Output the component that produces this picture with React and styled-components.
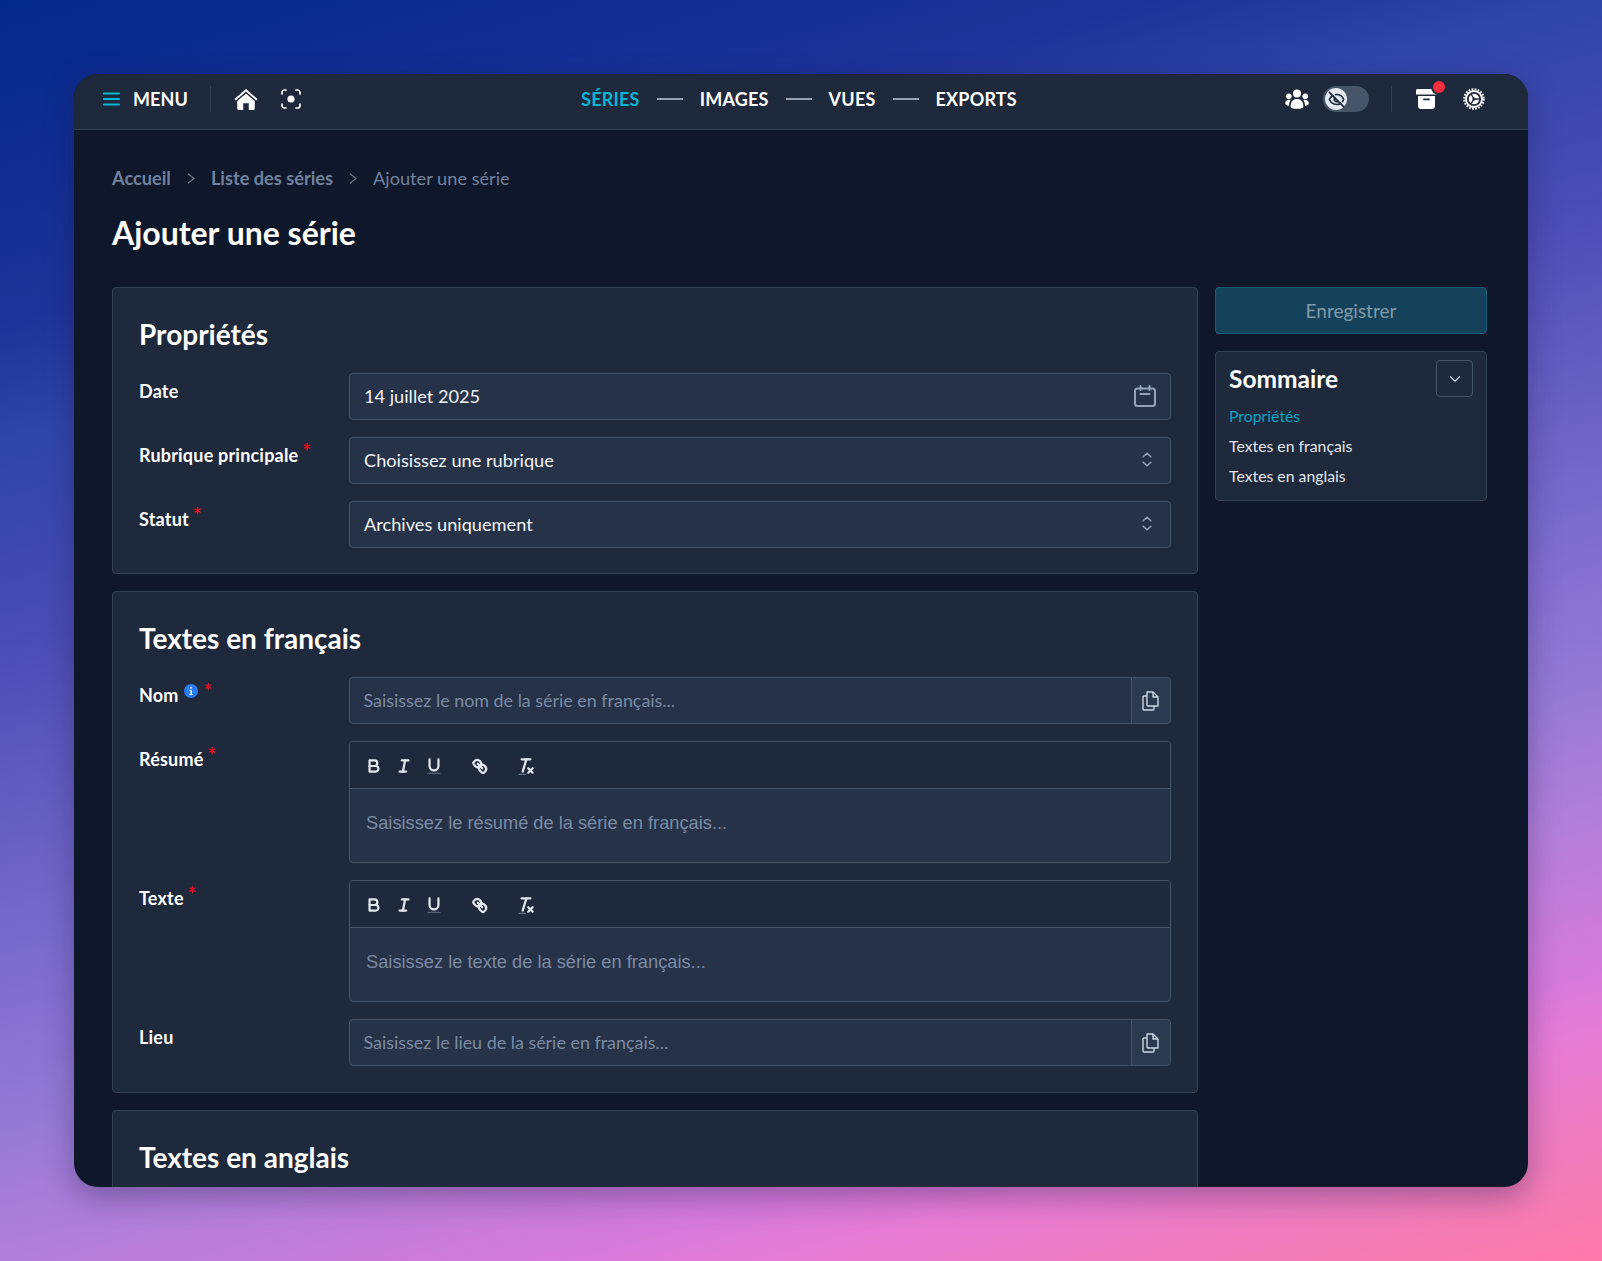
import React from 'react';
import styled, { createGlobalStyle } from 'styled-components';
import { ChevronDown, EyeOff } from 'lucide-react';

const GlobalStyle = createGlobalStyle`
  html, body {
    margin: 0;
    padding: 0;
  }
  body {
    font-family: Lato, "Liberation Sans", sans-serif;
    color: #fff;
  }
  * {
    box-sizing: border-box;
  }
`;

const MenuIcon = () => (
  <svg width="17" height="14" viewBox="0 0 17 14" fill="#06b6d4">
    <rect x="0" y="0.5" width="17" height="2" rx="0.8" />
    <rect x="0" y="6" width="17" height="2" rx="0.8" />
    <rect x="0" y="11.5" width="17" height="2" rx="0.8" />
  </svg>
);

const HomeIcon = () => (
  <svg width="24" height="23" viewBox="0 0 26 24" fill="#fff">
    <path d="M13 0.5 L25.5 11.5 L24 13 L13 3.4 L2 13 L0.5 11.5 Z" />
    <path d="M13 5.4 L22.5 13.6 V21.5 a2 2 0 0 1 -2 2 H16 V16 H10 V23.5 H5.5 a2 2 0 0 1 -2 -2 V13.6 Z" />
  </svg>
);

const FocusIcon = () => (
  <svg width="20" height="20" viewBox="0 0 20 20" fill="none" stroke="#fff" strokeWidth="1.7" strokeLinecap="round">
    <path d="M1 5 V3.5 A2.5 2.5 0 0 1 3.5 1 H5" />
    <path d="M15 1 H16.5 A2.5 2.5 0 0 1 19 3.5 V5" />
    <path d="M19 15 V16.5 A2.5 2.5 0 0 1 16.5 19 H15" />
    <path d="M5 19 H3.5 A2.5 2.5 0 0 1 1 16.5 V15" />
    <circle cx="10" cy="10" r="3.6" fill="#fff" stroke="none" />
  </svg>
);

const UsersIcon = () => (
  <svg width="24" height="20" viewBox="0 0 24 20" fill="#fff">
    <circle cx="12" cy="4.4" r="4" />
    <circle cx="3.8" cy="7.2" r="2.8" />
    <circle cx="20.2" cy="7.2" r="2.8" />
    <path d="M5.6 18 C5.6 12.6 8 10 12 10 C16 10 18.4 12.6 18.4 18 C18.4 19.2 16 19.8 12 19.8 C8 19.8 5.6 19.2 5.6 18 Z" />
    <path d="M0.2 14.6 C0.2 12 1.6 10.8 4.2 10.8 C4.8 10.8 5.2 10.9 5.6 11 C4.6 12.4 4.1 14.2 4 16.8 C1.6 16.6 0.2 15.9 0.2 14.6 Z" />
    <path d="M23.8 14.6 C23.8 12 22.4 10.8 19.8 10.8 C19.2 10.8 18.8 10.9 18.4 11 C19.4 12.4 19.9 14.2 20 16.8 C22.4 16.6 23.8 15.9 23.8 14.6 Z" />
  </svg>
);

const ArchiveIcon = () => (
  <svg width="21" height="20" viewBox="0 0 21 20" fill="#fff">
    <path d="M1.5 0 H19.5 a1.5 1.5 0 0 1 1.5 1.5 V5.5 H0 V1.5 A1.5 1.5 0 0 1 1.5 0 Z" />
    <path fillRule="evenodd" d="M2 7 H19 V17 a3 3 0 0 1 -3 3 H5 a3 3 0 0 1 -3 -3 Z M8 9.5 a0.9 0.9 0 0 0 0 1.8 H13 a0.9 0.9 0 0 0 0 -1.8 Z" />
  </svg>
);

const GearIcon = () => (
  <svg width="22" height="22" viewBox="0 0 22 22" fill="none" stroke="#fff">
    <circle cx="11" cy="11" r="8" strokeWidth="1.8" />
    <circle cx="11" cy="11" r="9.8" strokeWidth="2" strokeDasharray="1.7 1.4" />
    <circle cx="11" cy="11" r="5.2" fill="#fff" stroke="none" />
    <path d="M11 11 L16.4 11 M11 11 L8.2 6.4 M11 11 L8.2 15.6" stroke="#1e293b" strokeWidth="1.4" />
    <circle cx="11" cy="11" r="1.6" fill="#1e293b" stroke="none" />
  </svg>
);

const CrumbChevron = () => (
  <svg width="8" height="11" viewBox="0 0 8 11" fill="none" stroke="#64748b" strokeWidth="1.2">
    <path d="M1 0.7 L7 5.5 L1 10.3" />
  </svg>
);

const CalendarIcon = () => (
  <svg width="22" height="22" viewBox="0 0 22 22" fill="none" stroke="#94a3b8" strokeWidth="2" strokeLinecap="round">
    <rect x="1" y="3.5" width="20" height="17.5" rx="2.5" />
    <path d="M6.5 1 V5 M15.5 1 V5 M6.5 9 H15.5" />
  </svg>
);

const UpDownIcon = () => (
  <svg width="10" height="15" viewBox="0 0 10 15" fill="none" stroke="#94a3b8" strokeWidth="1.5" strokeLinecap="round" strokeLinejoin="round">
    <path d="M1.2 4.8 L5 1.2 L8.8 4.8" />
    <path d="M1.2 10.2 L5 13.8 L8.8 10.2" />
  </svg>
);

const CopyIcon = () => (
  <svg width="17" height="20" viewBox="0 0 17 20" fill="none" stroke="#cbd5e1" strokeWidth="1.4" strokeLinejoin="round">
    <path d="M5 1 H11 L16 6 V15 H6 a1 1 0 0 1 -1 -1 Z" />
    <path d="M11 1 V6 H16" />
    <path d="M5 5 H2 a1 1 0 0 0 -1 1 V18 a1 1 0 0 0 1 1 H11 a1 1 0 0 0 1 -1 V15" />
  </svg>
);

const BoldIcon = () => (
  <svg viewBox="0 0 18 18">
    <path d="M5,4H9.5A2.5,2.5,0,0,1,12,6.5v0A2.5,2.5,0,0,1,9.5,9H5A0,0,0,0,1,5,9V4A0,0,0,0,1,5,4Z" />
    <path d="M5,9h5.5A2.5,2.5,0,0,1,13,11.5v0A2.5,2.5,0,0,1,10.5,14H5a0,0,0,0,1,0,0V9A0,0,0,0,1,5,9Z" />
  </svg>
);

const ItalicIcon = () => (
  <svg viewBox="0 0 18 18">
    <line x1="7" x2="13" y1="4" y2="4" />
    <line x1="5" x2="11" y1="14" y2="14" />
    <line x1="8" x2="10" y1="14" y2="4" />
  </svg>
);

const UnderlineIcon = () => (
  <svg viewBox="0 0 18 18">
    <path d="M5,3V9a4.012,4.012,0,0,0,4,4H9a4.012,4.012,0,0,0,4-4V3" />
    <rect x="3" y="15" width="12" height="1" rx="0.5" fill="#64748b" stroke="none" />
  </svg>
);

const LinkIcon = () => (
  <svg viewBox="0 0 18 18">
    <line x1="7" x2="11" y1="7" y2="11" />
    <path d="M8.9,4.577a3.476,3.476,0,0,1,.36,4.679A3.476,3.476,0,0,1,4.577,8.9C3.185,7.5,2.331,6.458,3.21,5.577l1.367-1.367A3.476,3.476,0,0,1,8.9,4.577Z" />
    <path d="M13.423,9.1a3.476,3.476,0,0,0-4.679-.36,3.476,3.476,0,0,0,.36,4.679c1.392,1.392,2.5,2.562,3.319,1.7l1.367-1.367A3.476,3.476,0,0,0,13.423,9.1Z" />
  </svg>
);

const CleanIcon = () => (
  <svg viewBox="0 0 18 18">
    <line x1="5" x2="13" y1="3" y2="3" />
    <line x1="6" x2="9.35" y1="14" y2="3" />
    <line x1="11" x2="15" y1="11" y2="15" />
    <line x1="15" x2="11" y1="11" y2="15" />
    <rect x="2" y="16" width="7" height="1" rx="0.5" fill="#64748b" stroke="none" />
  </svg>
);

const InfoIcon = () => (
  <svg width="14" height="14" viewBox="0 0 14 14">
    <circle cx="7" cy="7" r="7" fill="#2b7bf3" />
    <circle cx="7" cy="3.8" r="1" fill="#fff" />
    <path d="M5.6 6 H7.8 V10 H8.8 V11 H5.4 V10 H6.5 V7 H5.6 Z" fill="#fff" />
  </svg>
);

const Toolbar = () => (
  <EditorBar>
    <ToolButton><BoldIcon /></ToolButton>
    <ToolButton><ItalicIcon /></ToolButton>
    <ToolButton><UnderlineIcon /></ToolButton>
    <ToolButton $spaced><LinkIcon /></ToolButton>
    <ToolButton $spaced><CleanIcon /></ToolButton>
  </EditorBar>
);

const Field = ({ label, info, required, children }) => (
  <Row>
    <Label>
      {label}
      {info && <InfoWrap><InfoIcon /></InfoWrap>}
      {required && <Star $afterInfo={info}>*</Star>}
    </Label>
    {children}
  </Row>
);

const App = () => (
  <>
    <GlobalStyle />
    <Page>
      <Window>
        <TopBar>
          <BarLeft>
            <MenuButton>
              <MenuIcon />
              MENU
            </MenuButton>
            <Divider />
            <HomeIcon />
            <FocusIcon />
          </BarLeft>
          <Steps>
            <Step $active>SÉRIES</Step>
            <Dash />
            <Step>IMAGES</Step>
            <Dash />
            <Step>VUES</Step>
            <Dash />
            <Step>EXPORTS</Step>
          </Steps>
          <BarRight>
            <UsersIcon />
            <Toggle>
              <Knob><EyeOff size={17} color="#1e293b" strokeWidth={2.4} /></Knob>
            </Toggle>
            <Divider $wide />
            <ArchiveWrap>
              <ArchiveIcon />
              <Badge />
            </ArchiveWrap>
            <GearIcon />
          </BarRight>
        </TopBar>

        <Content>
          <Crumbs>
            <CrumbLink>Accueil</CrumbLink>
            <CrumbChevron />
            <CrumbLink>Liste des séries</CrumbLink>
            <CrumbChevron />
            <CrumbCurrent>Ajouter une série</CrumbCurrent>
          </Crumbs>
          <PageTitle>Ajouter une série</PageTitle>

          <Columns>
            <MainColumn>
              <Card>
                <CardTitle>Propriétés</CardTitle>
                <Rows>
                  <Field label="Date">
                    <Input>
                      <Value>14 juillet 2025</Value>
                      <CalendarIcon />
                    </Input>
                  </Field>
                  <Field label="Rubrique principale" required>
                    <Input>
                      <Value>Choisissez une rubrique</Value>
                      <SelectIcon><UpDownIcon /></SelectIcon>
                    </Input>
                  </Field>
                  <Field label="Statut" required>
                    <Input>
                      <Value>Archives uniquement</Value>
                      <SelectIcon><UpDownIcon /></SelectIcon>
                    </Input>
                  </Field>
                </Rows>
              </Card>

              <Card>
                <CardTitle>Textes en français</CardTitle>
                <Rows>
                  <Field label="Nom" info required>
                    <InputGroup>
                      <GroupInput><Placeholder>Saisissez le nom de la série en français...</Placeholder></GroupInput>
                      <CopyButton><CopyIcon /></CopyButton>
                    </InputGroup>
                  </Field>
                  <Field label="Résumé" required>
                    <Editor>
                      <Toolbar />
                      <EditorBody>Saisissez le résumé de la série en français...</EditorBody>
                    </Editor>
                  </Field>
                  <Field label="Texte" required>
                    <Editor>
                      <Toolbar />
                      <EditorBody>Saisissez le texte de la série en français...</EditorBody>
                    </Editor>
                  </Field>
                  <Field label="Lieu">
                    <InputGroup>
                      <GroupInput><Placeholder>Saisissez le lieu de la série en français...</Placeholder></GroupInput>
                      <CopyButton><CopyIcon /></CopyButton>
                    </InputGroup>
                  </Field>
                </Rows>
              </Card>

              <Card>
                <CardTitle>Textes en anglais</CardTitle>
              </Card>
            </MainColumn>

            <SideColumn>
              <SaveButton>Enregistrer</SaveButton>
              <Summary>
                <SummaryHead>
                  <SummaryTitle>Sommaire</SummaryTitle>
                  <Collapse><ChevronDown size={18} color="#cbd5e1" strokeWidth={1.5} /></Collapse>
                </SummaryHead>
                <SummaryLink $active>Propriétés</SummaryLink>
                <SummaryLink>Textes en français</SummaryLink>
                <SummaryLink>Textes en anglais</SummaryLink>
              </Summary>
            </SideColumn>
          </Columns>
        </Content>
      </Window>
    </Page>
  </>
);

export default App;

const Page = styled.div`
  height: 1261px;
  padding: 74px 74px 0;
  overflow: hidden;
  background: linear-gradient(
    164.4deg,
    #02288a 0%,
    #1e3399 19%,
    #2f45a8 26%,
    #4b4cb5 38%,
    #6a62c4 50%,
    #7f6ed0 58%,
    #947ad4 66%,
    #b27fda 74%,
    #d67ada 83%,
    #e87cd4 87%,
    #f07cb8 94%,
    #ff7aa8 100%
  );
`;

const Window = styled.div`
  height: 1113px;
  border-radius: 24px;
  overflow: hidden;
  background: #0f172a;
  box-shadow: 0 10px 30px rgba(30, 20, 60, 0.35);
`;

const TopBar = styled.header`
  display: grid;
  grid-template-columns: 1fr auto 1fr;
  align-items: center;
  height: 56px;
  padding: 0 33px 5px 29px;
  background: #1e293b;
  border-bottom: 1px solid #334155;
`;

const BarLeft = styled.div`
  display: flex;
  align-items: center;
  gap: 23px;
`;

const BarRight = styled.div`
  display: flex;
  align-items: center;
  justify-content: flex-end;
  gap: 14px;
  padding-right: 10px;
`;

const MenuButton = styled.div`
  display: flex;
  align-items: center;
  gap: 13px;
  font-size: 18px;
  font-weight: 700;
  letter-spacing: 0.1px;
  margin-right: -1px;
`;

const Divider = styled.div`
  width: 1px;
  height: 26px;
  background: #334155;
  margin: ${(p) => (p.$wide ? '0 10px 0 8px' : '0')};
`;

const Steps = styled.nav`
  display: flex;
  align-items: center;
  gap: 17px;
`;

const Step = styled.span`
  font-size: 18px;
  font-weight: 700;
  letter-spacing: 0.2px;
  color: ${(p) => (p.$active ? '#06b6d4' : '#fff')};
`;

const Dash = styled.span`
  width: 26px;
  height: 2px;
  background: #94a3b8;
`;

const Toggle = styled.div`
  display: flex;
  align-items: center;
  width: 46px;
  height: 26px;
  padding: 2px;
  border-radius: 13px;
  background: #475569;
`;

const Knob = styled.div`
  display: flex;
  align-items: center;
  justify-content: center;
  width: 22px;
  height: 22px;
  border-radius: 50%;
  background: #e2e8f0;
`;

const ArchiveWrap = styled.div`
  position: relative;
  display: flex;
  margin-right: 12px;
`;

const Badge = styled.span`
  position: absolute;
  top: -8px;
  right: -8px;
  width: 12px;
  height: 12px;
  border-radius: 50%;
  background: #f43040;
  box-shadow: 0 0 0 2px #1e293b;
`;

const Content = styled.main`
  padding: 35px 41px 0 38px;
`;

const Crumbs = styled.div`
  display: flex;
  align-items: center;
  gap: 16px;
  height: 26px;
  font-size: 18.2px;
`;

const CrumbLink = styled.span`
  font-weight: 700;
  color: #71829d;
`;

const CrumbCurrent = styled.span`
  color: #71829d;
`;

const PageTitle = styled.h1`
  margin: 22px 0 34px;
  font-size: 32px;
  line-height: 40px;
  font-weight: 700;
`;

const Columns = styled.div`
  display: flex;
  gap: 17px;
  align-items: flex-start;
`;

const MainColumn = styled.div`
  display: flex;
  flex-direction: column;
  gap: 17px;
  width: 1086px;
  flex: none;
`;

const SideColumn = styled.aside`
  display: flex;
  flex-direction: column;
  gap: 17px;
  flex: 1;
`;

const Card = styled.section`
  padding: 28px 26px 26px;
  background: #1e293b;
  border: 1px solid #334155;
  border-radius: 4px;

  &:first-child {
    padding-bottom: 25px;
  }
`;

const CardTitle = styled.h2`
  margin: 0 0 21px;
  font-size: 28px;
  line-height: 36px;
  font-weight: 700;
`;

const Rows = styled.div`
  display: flex;
  flex-direction: column;
  gap: 17px;
`;

const Row = styled.div`
  display: grid;
  grid-template-columns: 210px 1fr;
`;

const Label = styled.div`
  padding-top: 6px;
  font-size: 18px;
  line-height: 24px;
  font-weight: 700;
  letter-spacing: 0.2px;
`;

const InfoWrap = styled.span`
  position: relative;
  top: -4px;
  margin-left: 5px;
`;

const Star = styled.span`
  position: relative;
  top: -3px;
  margin-left: ${(p) => (p.$afterInfo ? '6px' : '4px')};
  font-size: 20px;
  font-weight: 700;
  line-height: 20px;
  color: #e00b1c;
`;

const Input = styled.div`
  display: flex;
  align-items: center;
  justify-content: space-between;
  height: 47px;
  padding: 0 14px 2px;
  background: #263248;
  border: 1px solid #475569;
  border-radius: 4px;
`;

const Value = styled.span`
  font-size: 18.2px;
  color: #f1f5f9;
`;

const SelectIcon = styled.span`
  display: flex;
  margin-right: 4px;
`;

const InputGroup = styled.div`
  display: flex;
  height: 47px;
  background: #263248;
  border: 1px solid #475569;
  border-radius: 4px;
`;

const GroupInput = styled.div`
  display: flex;
  align-items: center;
  flex: 1;
  padding: 0 14px 2px 13.5px;
`;

const Placeholder = styled.span`
  font-size: 17.9px;
  color: #7b8ba3;
`;

const CopyButton = styled.div`
  display: flex;
  align-items: center;
  justify-content: center;
  width: 39px;
  padding-right: 2px;
  background: #2c3a50;
  border-left: 1px solid #475569;
  border-radius: 0 4px 4px 0;
`;

const Editor = styled.div`
  background: #263248;
  border: 1px solid #475569;
  border-radius: 4px;
  overflow: hidden;
`;

const EditorBar = styled.div`
  display: flex;
  align-items: center;
  height: 47px;
  padding: 2px 14px 0;
  background: #1e293b;
  border-bottom: 1px solid #475569;
`;

const ToolButton = styled.span`
  display: flex;
  width: 20px;
  height: 20px;
  margin-right: 10px;
  margin-left: ${(p) => (p.$spaced ? '16px' : '0')};

  svg {
    width: 100%;
    height: 100%;
    fill: none;
    stroke: #e2e8f0;
    stroke-width: 2;
    stroke-linecap: round;
    stroke-linejoin: round;
  }
`;

const EditorBody = styled.div`
  height: 73px;
  padding: 23px 16px 0;
  font-family: "Liberation Sans", Arial, sans-serif;
  font-size: 18.25px;
  line-height: 22px;
  color: #7b8ba3;
`;

const SaveButton = styled.div`
  display: flex;
  align-items: center;
  justify-content: center;
  height: 47px;
  font-size: 19px;
  color: #7f9aa8;
  background: #15425a;
  border: 1px solid #155e75;
  border-radius: 4px;
`;

const Summary = styled.div`
  display: flex;
  flex-direction: column;
  padding: 8px 13px 9px;
  background: #1e293b;
  border: 1px solid #334155;
  border-radius: 4px;
`;

const SummaryHead = styled.div`
  display: flex;
  align-items: center;
  justify-content: space-between;
  margin-bottom: 4px;
`;

const SummaryTitle = styled.div`
  font-size: 24.5px;
  font-weight: 700;
`;

const Collapse = styled.div`
  display: flex;
  align-items: center;
  justify-content: center;
  width: 37px;
  height: 37px;
  border: 1px solid #475569;
  border-radius: 4px;
`;

const SummaryLink = styled.div`
  font-size: 15.8px;
  line-height: 30px;
  color: ${(p) => (p.$active ? '#06a4c4' : '#e2e8f0')};
`;
